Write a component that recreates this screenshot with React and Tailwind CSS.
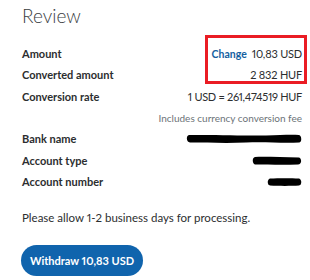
import React from "react";

function Blob({ w, d }) {
  return (
    <svg width={w} height="10" viewBox={`0 0 ${w} 10`} className="block">
      <path d={d} fill="#000" />
    </svg>
  );
}

function Row({ label, children }) {
  return (
    <div className="flex h-[21.3px] items-center justify-between">
      <span className="font-bold text-[#2c2e2f]">{label}</span>
      <div className="flex items-center">{children}</div>
    </div>
  );
}

export default function App() {
  return (
    <div className="relative h-[280px] w-[310px] overflow-hidden bg-white font-['Lato','Noto_Sans',sans-serif] text-[11px] leading-[16px] text-[#2c2e2f] proportional-nums">
      <div className="pl-[22px] pr-[8px] pt-[6px]">
        <h1 className="text-[19px] font-light leading-[20px] text-[#3a3d3f]">Review</h1>
        <div className="mt-[17.5px] flex flex-col">
          <Row label="Amount">
            <span className="mr-[5px] text-[10.5px] font-bold text-[#14609f]">Change</span>
            <span className="tracking-[-0.2px]">10,83 USD</span>
          </Row>
          <Row label="Converted amount">
            <span className="tracking-[-0.2px]">2 832 HUF</span>
          </Row>
          <Row label="Conversion rate">
            <span className="tracking-[-0.3px]">1 USD = 261,474519 HUF</span>
          </Row>
          <div className="flex h-[21.3px] items-center justify-end text-[10px] text-[#6c7378]">
            Includes currency conversion fee
          </div>
          <Row label="Bank name">
            <Blob w={116} d="M3 1 C30 0.5 60 2 80 1.5 C95 1 105 0.5 113 1 C116 2 116 8.5 113 8.5 C95 9.5 80 7.5 60 8.5 C40 9.5 20 8.5 4 8.5 C0 8 0 1.5 3 1 Z" />
          </Row>
          <Row label="Account type">
            <Blob w={50} d="M3 1 C15 0.5 30 1.5 47 1.5 C50 2.5 50 8.5 46 8.5 C30 9 15 8.5 3 8.5 C0 7.5 0 1.5 3 1 Z" />
          </Row>
          <Row label="Account number">
            <Blob w={35} d="M3 1.5 C12 1 24 1 32 1.5 C35 2.5 35 8 32 8.5 C24 9 12 9 3 8.5 C0 8 0 2.5 3 1.5 Z" />
          </Row>
        </div>
        <p className="mt-[17.5px] text-[11.5px] text-[#2c2e2f]">Please allow 1-2 business days for processing.</p>
        <button className="mt-[19px] -ml-[1px] flex h-[31px] w-[122px] items-center justify-center rounded-full bg-[#1064ad] text-[11px] font-bold text-white">
          Withdraw 10,83 USD
        </button>
      </div>
      <div className="absolute left-[205px] top-[35px] h-[49px] w-[102px] border-[3px] border-[#ea1c24]" />
    </div>
  );
}
